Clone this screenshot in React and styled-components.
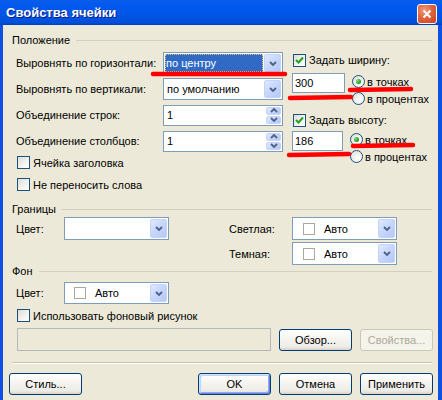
import React from 'react';
import styled, { createGlobalStyle } from 'styled-components';

const GlobalStyle = createGlobalStyle`
  html, body { margin: 0; padding: 0; background: #ECE9D8; }
  body { font-family: "Liberation Sans", Arial, sans-serif; font-size: 11px; color: #000; }
`;

const Window = styled.div`
  position: relative;
  width: 442px;
  height: 400px;
  overflow: hidden;
  display: flex;
  flex-direction: column;
  background: #ECE9D8;
`;

const TitleBar = styled.div`
  flex: none;
  height: 25px;
  display: flex;
  align-items: center;
  justify-content: space-between;
  padding: 0 5px 0 6px;
  background: linear-gradient(180deg, #0A5DEA 0%, #0058EE 25%, #0054E3 65%, #004FD9 90%, #003DC2 100%);
`;

const Title = styled.span`
  color: #fff;
  font-weight: bold;
  font-size: 13px;
  text-shadow: 1px 1px #0A1A8A;
`;

const CloseBtn = styled.div`
  width: 18px;
  height: 18px;
  margin-top: 2px;
  border: 1px solid #fff;
  border-radius: 3px;
  display: flex;
  align-items: center;
  justify-content: center;
  background: radial-gradient(circle at 35% 30%, #F29B7E 0%, #E2643F 45%, #C8411C 100%);
`;

const Frame = styled.div`
  flex: 1;
  border-left: 3px solid #0C51E2;
  border-right: 4px solid #0C51E2;
  padding: 8px 5px 0 9px;
  display: flex;
  flex-direction: column;
`;

const GroupHeader = styled.div`
  display: flex;
  align-items: center;
  gap: 6px;
  height: 14px;
  margin-top: ${p => p.$mt || 0}px;
  margin-right: 1px;
  &::after {
    content: '';
    flex: 1;
    height: 1px;
    background: #D0D0BF;
  }
`;

const PositionArea = styled.div`
  display: flex;
  padding-left: 4px;
  margin-top: 5px;
`;

const LeftCol = styled.div`
  width: 267px;
  display: flex;
  flex-direction: column;
  gap: 4px;
`;

const FieldRow = styled.div`
  display: grid;
  grid-template-columns: ${p => p.$cols};
  align-items: center;
  height: 22px;
`;

const RightCol = styled.div`
  margin-left: 9px;
  display: flex;
  flex-direction: column;
`;

const CheckRow = styled.label`
  display: flex;
  align-items: center;
  height: ${p => p.$h || 17}px;
  gap: 3px;
  margin-left: ${p => p.$ml || 0}px;
  margin-top: ${p => p.$mt || 0}px;
`;

const Box = styled.span`
  width: 11px;
  height: 11px;
  border: 1px solid #1C5180;
  background: linear-gradient(135deg, #DCDCD7 0%, #F4F4F0 60%, #FFFFFF 100%);
  display: flex;
  align-items: center;
  justify-content: center;
`;

const SizeRow = styled.div`
  display: flex;
  margin-top: ${p => p.$mt}px;
  height: 34px;
`;

const TextInput = styled.div`
  box-sizing: border-box;
  width: ${p => p.$w}px;
  height: ${p => p.$h || 20}px;
  border: 1px solid ${p => (p.$disabled ? '#B4B9BC' : '#7F9DB9')};
  background: ${p => (p.$disabled ? '#ECE9D8' : '#fff')};
  padding-left: 2px;
  display: flex;
  align-items: center;
`;

const RadioGroup = styled.div`
  display: flex;
  flex-direction: column;
  margin-left: 7px;
`;

const RadioRow = styled.div`
  display: flex;
  align-items: center;
  gap: 2px;
  height: 17px;
`;

const RadioCircle = styled.span`
  box-sizing: border-box;
  width: 13px;
  height: 13px;
  border-radius: 50%;
  border: 1px solid #1C5180;
  background: radial-gradient(circle at 65% 65%, #FFFFFF 0%, #F0F0EC 45%, #D6D6CF 100%);
  display: flex;
  align-items: center;
  justify-content: center;
  &::after {
    content: '';
    display: ${p => (p.$on ? 'block' : 'none')};
    width: 5px;
    height: 5px;
    border-radius: 50%;
    background: radial-gradient(circle at 35% 35%, #7BE37A 0%, #21A121 60%, #0E7A0E 100%);
  }
`;

const ComboBox = styled.div`
  box-sizing: border-box;
  width: ${p => p.$w}px;
  height: ${p => p.$h || 22}px;
  border: 1px solid #7F9DB9;
  background: #fff;
  display: flex;
  align-items: stretch;
  padding: 1px;
`;

const ComboValue = styled.div`
  flex: 1;
  display: flex;
  align-items: center;
  padding-left: ${p => p.$pl || 1}px;
  margin-right: 1px;
  background: ${p => (p.$sel ? '#316AC5' : 'transparent')};
  color: ${p => (p.$sel ? '#fff' : '#000')};
  outline: ${p => (p.$sel ? '1px dotted #E8C46A' : 'none')};
  outline-offset: -1px;
`;

const DropBtn = styled.div`
  box-sizing: border-box;
  width: 17px;
  border: 1px solid #C3D3FA;
  border-radius: 2px;
  background: linear-gradient(135deg, #E1E9FE 0%, #C8D7FC 45%, #B4C7F5 100%);
  display: flex;
  align-items: center;
  justify-content: center;
`;

const SpinBtns = styled.div`
  width: 15px;
  display: flex;
  flex-direction: column;
  gap: 1px;
`;

const SpinHalf = styled(DropBtn)`
  width: 15px;
  flex: 1;
`;

const Swatch = styled.span`
  width: 10px;
  height: 10px;
  border: 1px solid #ACA899;
  background: #fff;
  margin-right: 9px;
`;

const ColorGrid = styled.div`
  display: grid;
  grid-template-columns: 48px 105px 60px 63px 105px;
  grid-auto-rows: 23px;
  row-gap: 2px;
  align-items: center;
  padding-left: 4px;
  margin-top: 1px;
`;

const BgRow = styled.div`
  display: grid;
  grid-template-columns: 48px 105px;
  align-items: center;
  padding-left: 4px;
  margin-top: 4px;
`;

const FileRow = styled.div`
  display: flex;
  align-items: center;
  margin: 4px 0 0 5px;
  gap: 8px;
`;

const Button = styled.div`
  box-sizing: border-box;
  width: 73px;
  height: 22px;
  border: 1px solid ${p => (p.$disabled ? '#C9C7BA' : '#003C74')};
  border-radius: 3px;
  display: flex;
  align-items: center;
  justify-content: center;
  color: ${p => (p.$disabled ? '#ACA899' : '#000')};
  background: ${p => (p.$disabled ? '#F5F4EA' : 'linear-gradient(180deg, #FFFFFF 0%, #F4F3EE 50%, #ECEBE6 85%, #D8D2C6 100%)')};
  box-shadow: ${p => (p.$default ? 'inset 1px 1px #CEE7FF, inset -1px -1px #6982EE, inset 2px 2px #BCD4F6, inset -2px -2px #89ADE4' : 'none')};
  margin-left: ${p => p.$ml || 0}px;
`;

const Separator = styled.div`
  height: 1px;
  background: #C5C2B2;
  border-bottom: 1px solid #fff;
  margin: 11px 1px 0 0;
`;

const ButtonBar = styled.div`
  display: flex;
  gap: 8px;
  margin: 9px 0 0 -3px;
`;

const Overlay = styled.svg`
  position: absolute;
  top: 0;
  left: 0;
  pointer-events: none;
`;

const Chevron = ({ up }) => (
  <svg width="8" height="5" viewBox="0 0 8 5">
    <path d={up ? 'M1 4 L4 1 L7 4' : 'M1 1 L4 4 L7 1'} stroke="#4D6185" strokeWidth="1.8" fill="none" />
  </svg>
);

const Combo = ({ w, h, sel, pl, children }) => (
  <ComboBox $w={w} $h={h}>
    <ComboValue $sel={sel} $pl={pl}>{children}</ComboValue>
    <DropBtn><Chevron /></DropBtn>
  </ComboBox>
);

const Spin = ({ value }) => (
  <ComboBox $w={120} $h={21}>
    <ComboValue $pl={2}>{value}</ComboValue>
    <SpinBtns>
      <SpinHalf><Chevron up /></SpinHalf>
      <SpinHalf><Chevron /></SpinHalf>
    </SpinBtns>
  </ComboBox>
);

const Check = ({ checked, children, ml, mt, h }) => (
  <CheckRow $ml={ml} $mt={mt} $h={h}>
    <Box>
      {checked && (
        <svg width="9" height="9" viewBox="0 0 9 9">
          <path d="M1 4 L3.5 6.5 L8 1.5" stroke="#21A121" strokeWidth="2" fill="none" />
        </svg>
      )}
    </Box>
    {children}
  </CheckRow>
);

const Radio = ({ on, children }) => (
  <RadioRow>
    <RadioCircle $on={on} />
    {children}
  </RadioRow>
);

const SizeBlock = ({ value, w, mt }) => (
  <SizeRow $mt={mt}>
    <TextInput $w={w}>{value}</TextInput>
    <RadioGroup>
      <Radio on>в точках</Radio>
      <Radio>в процентах</Radio>
    </RadioGroup>
  </SizeRow>
);

const ColorValue = () => (
  <>
    <Swatch />
    Авто
  </>
);

export default function App() {
  return (
    <Window>
      <GlobalStyle />
      <TitleBar>
        <Title>Свойства ячейки</Title>
        <CloseBtn>
          <svg width="10" height="10" viewBox="0 0 10 10">
            <path d="M1.5 1.5 L8.5 8.5 M8.5 1.5 L1.5 8.5" stroke="#fff" strokeWidth="2" />
          </svg>
        </CloseBtn>
      </TitleBar>
      <Frame>
        <GroupHeader>Положение</GroupHeader>
        <PositionArea>
          <LeftCol>
            <FieldRow $cols="147px 120px">
              <span>Выровнять по горизонтали:</span>
              <Combo w={120} sel>по центру</Combo>
            </FieldRow>
            <FieldRow $cols="147px 120px">
              <span>Выровнять по вертикали:</span>
              <Combo w={120} pl={2}>по умолчанию</Combo>
            </FieldRow>
            <FieldRow $cols="147px 120px">
              <span>Объединение строк:</span>
              <Spin value="1" />
            </FieldRow>
            <FieldRow $cols="147px 120px">
              <span>Объединение столбцов:</span>
              <Spin value="1" />
            </FieldRow>
            <Check ml={1} mt={-2}>Ячейка заголовка</Check>
            <Check ml={1} mt={1}>Не переносить слова</Check>
          </LeftCol>
          <RightCol>
            <Check checked ml={1} h={16}>Задать ширину:</Check>
            <SizeBlock value="300" w={53} mt={5} />
            <Check checked ml={1} h={16} mt={5}>Задать высоту:</Check>
            <SizeBlock value="186" w={51} mt={3} />
          </RightCol>
        </PositionArea>

        <GroupHeader $mt={9}>Границы</GroupHeader>
        <ColorGrid>
          <span>Цвет:</span>
          <Combo w={105} h={23} />
          <span />
          <span>Светлая:</span>
          <Combo w={105} h={23} pl={9}><ColorValue /></Combo>
          <span />
          <span />
          <span />
          <span>Темная:</span>
          <Combo w={105} h={23} pl={9}><ColorValue /></Combo>
        </ColorGrid>

        <GroupHeader $mt={-1}>Фон</GroupHeader>
        <BgRow>
          <span>Цвет:</span>
          <Combo w={105} pl={8}><ColorValue /></Combo>
        </BgRow>
        <Check ml={5} mt={3}>Использовать фоновый рисунок</Check>
        <FileRow>
          <TextInput $w={254} $h={23} $disabled />
          <Button>Обзор...</Button>
          <Button $disabled>Свойства...</Button>
        </FileRow>

        <Separator />
        <ButtonBar>
          <Button>Стиль...</Button>
          <Button $default $ml={108}>OK</Button>
          <Button>Отмена</Button>
          <Button>Применить</Button>
        </ButtonBar>
      </Frame>

      <Overlay width="442" height="400" viewBox="0 0 442 400">
        <g stroke="#FF0000" strokeWidth="4.5" strokeLinecap="round">
          <line x1="153" y1="74" x2="285" y2="74" />
          <line x1="290" y1="98" x2="351" y2="97" />
          <line x1="350" y1="90" x2="411" y2="89" />
          <line x1="289" y1="155" x2="349" y2="154" />
          <line x1="353" y1="146" x2="413" y2="145" />
        </g>
      </Overlay>
    </Window>
  );
}
